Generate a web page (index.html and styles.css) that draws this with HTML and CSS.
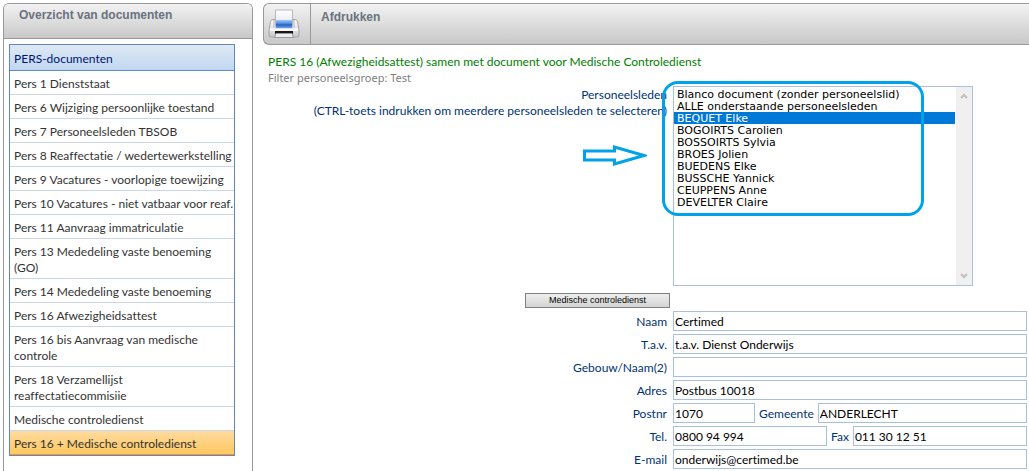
FILE: index.html
```html
<!DOCTYPE html>
<html lang="nl">

<head>
  <meta charset="UTF-8" />
  <meta name="viewport" content="width=device-width, initial-scale=1" />
  <title>Afdrukken</title>
  <link rel="stylesheet" href="styles.css">
</head>

<body>
  <div class="page">
    <aside class="sidebar">
      <h2 class="sidebar-title">Overzicht van documenten</h2>
      <nav class="menu">
        <h3 class="menu-title">PERS-documenten</h3>
        <a href="#">Pers 1 Dienststaat</a>
        <a href="#">Pers 6 Wijziging persoonlijke toestand</a>
        <a href="#">Pers 7 Personeelsleden TBSOB</a>
        <a href="#">Pers 8 Reaffectatie / wedertewerkstelling</a>
        <a href="#">Pers 9 Vacatures - voorlopige toewijzing</a>
        <a href="#">Pers 10 Vacatures - niet vatbaar voor reaf.</a>
        <a href="#">Pers 11 Aanvraag immatriculatie</a>
        <a href="#">Pers 13 Mededeling vaste benoeming (GO)</a>
        <a href="#">Pers 14 Mededeling vaste benoeming</a>
        <a href="#">Pers 16 Afwezigheidsattest</a>
        <a href="#">Pers 16 bis Aanvraag van medische controle</a>
        <a href="#">Pers 18 Verzamellijst reaffectatiecommisiie</a>
        <a href="#">Medische controledienst</a>
        <a href="#" class="active">Pers 16 + Medische controledienst</a>
      </nav>
    </aside>

    <main class="content">
      <header class="toolbar">
        <div class="toolbar-icon">
          <svg width="32" height="32" viewBox="0 0 32 32">
            <defs>
              <linearGradient id="paper" x1="0" y1="0" x2="0" y2="1">
                <stop offset="0" stop-color="#ffffff" />
                <stop offset="1" stop-color="#dfe6f0" />
              </linearGradient>
              <linearGradient id="case" x1="0" y1="0" x2="0" y2="1">
                <stop offset="0" stop-color="#ffffff" />
                <stop offset="1" stop-color="#c8c8cc" />
              </linearGradient>
              <linearGradient id="glass" x1="0" y1="0" x2="0" y2="1">
                <stop offset="0" stop-color="#a4c6f5" />
                <stop offset="0.4" stop-color="#5b93e4" />
                <stop offset="0.6" stop-color="#2461c4" />
                <stop offset="1" stop-color="#6aa2ee" />
              </linearGradient>
            </defs>
            <path d="M5 11.500h22q2 0 2.500 2L31 22v5q0 2-2 2H3q-2 0-2-2v-5l1.500-8.500q.5-2 2.500-2z" fill="url(#case)" stroke="#a4a4a8" />
            <path d="M5 12h22v8H5z" fill="#d2d2d6" />
            <path d="M7.500 2h17v16h-17z" fill="url(#paper)" stroke="#b8b8bc" />
            <path d="M8 12h16v8H8z" fill="url(#glass)" />
            <path d="M2 20q14 2 28 0v3H2z" fill="#fafafc" />
            <path d="M7 23h18v3H7z" fill="#151515" />
            <path d="M8 25.500h16l1.500 4h-19z" fill="#ececf0" stroke="#99999e" />
          </svg>
        </div>
        <h1 class="toolbar-title">Afdrukken</h1>
      </header>

      <p class="doc-title">PERS 16 (Afwezigheidsattest) samen met document voor Medische Controledienst</p>
      <p class="doc-filter">Filter personeelsgroep: Test</p>

      <form class="form">
        <label class="staff-label" for="staff">Personeelsleden<br>(CTRL-toets indrukken om meerdere personeelsleden te selecteren)</label>
        <div class="staff">
          <div class="listbox">
            <select id="staff" multiple size="10">
              <option>Blanco document (zonder personeelslid)</option>
              <option>ALLE onderstaande personeelsleden</option>
              <option selected>BEQUET Elke</option>
              <option>BOGOIRTS Carolien</option>
              <option>BOSSOIRTS Sylvia</option>
              <option>BROES Jolien</option>
              <option>BUEDENS Elke</option>
              <option>BUSSCHE Yannick</option>
              <option>CEUPPENS Anne</option>
              <option>DEVELTER Claire</option>
            </select>
            <div class="scrollbar">
              <svg width="8" height="6" viewBox="0 0 8 6"><path d="M1 5l3-3 3 3" /></svg>
              <svg width="8" height="6" viewBox="0 0 8 6"><path d="M1 1l3 3 3-3" /></svg>
            </div>
          </div>
          <div class="mark-box"></div>
          <svg class="mark-arrow" width="64" height="21" viewBox="0 0 64 21">
            <path d="M1.500 6h30V2L61 10.500 31.500 19v-4h-30z" />
          </svg>
        </div>

        <button type="button" class="service-button">Medische controledienst</button>

        <label for="naam">Naam</label>
        <input type="text" id="naam" value="Certimed">

        <label for="tav">T.a.v.</label>
        <input type="text" id="tav" value="t.a.v. Dienst Onderwijs">

        <label for="gebouw">Gebouw/Naam(2)</label>
        <input type="text" id="gebouw">

        <label for="adres">Adres</label>
        <input type="text" id="adres" value="Postbus 10018">

        <label for="postnr">Postnr</label>
        <div class="pair">
          <input type="text" id="postnr" class="short" value="1070">
          <label for="gemeente">Gemeente</label>
          <input type="text" id="gemeente" value="ANDERLECHT">
        </div>

        <label for="tel">Tel.</label>
        <div class="pair">
          <input type="text" id="tel" class="medium" value="0800 94 994">
          <label for="fax">Fax</label>
          <input type="text" id="fax" value="011 30 12 51">
        </div>

        <label for="email">E-mail</label>
        <input type="text" id="email" value="onderwijs@certimed.be">
      </form>
    </main>
  </div>
</body>

</html>
```
FILE: styles.css
```css
* {
  margin: 0;
  padding: 0;
  box-sizing: border-box;
}

body {
  font-family: Lato, 'Segoe UI', sans-serif;
  font-size: 12px;
  line-height: 16px;
  font-variant-ligatures: none;
  background-color: #fff;
  color: #333;
}

.page {
  display: flex;
  gap: 10px;
  min-height: 100vh;
  padding: 3px 0 0 3px;
}

/* left column */
.sidebar {
  flex: none;
  width: 250px;
  border: 1px solid #999;
  border-bottom: none;
  border-radius: 6px 6px 0 0;
}

.sidebar-title,
.toolbar {
  background: linear-gradient(#f2f2f2, #c8c8c8);
}

.sidebar-title,
.toolbar-title {
  font-family: 'Liberation Sans', Arial, sans-serif;
  font-size: 12px;
  line-height: 16px;
  color: #6b7280;
}

.sidebar-title {
  height: 35px;
  padding: 3px 15px;
  border-bottom: 1px solid #999;
  border-radius: 5px 5px 0 0;
}

.menu {
  width: 226px;
  margin: 5px;
  border: 1px solid #6187b8;
}

.menu-title {
  padding: 6px 4px 3px;
  font-size: 12px;
  font-weight: normal;
  color: #00156e;
  background: linear-gradient(#dfe9f5, #c0d7f1);
  border-bottom: 1px solid #5c8bc9;
}

.menu a {
  display: block;
  padding: 5px 0 2px 4px;
  color: #333;
  text-decoration: none;
  border-bottom: 1px solid #ccd6e8;
}

.menu a.active {
  background: linear-gradient(#ffdb9f, #ffc860);
  border-bottom-color: #f29536;
}

/* right column */
.content {
  flex: 1;
  min-width: 0;
}

.toolbar {
  display: flex;
  height: 42px;
  border: 1px solid #999;
  border-right: none;
  border-radius: 6px 0 0 6px;
}

.toolbar-icon {
  width: 47px;
  padding: 4px;
  border-right: 1px solid #999;
}

.toolbar-title {
  padding: 5px 10px;
}

.doc-title {
  padding: 9px 5px 0;
  color: #008000;
}

.doc-filter {
  padding: 0 5px;
  font-family: 'Noto Sans', sans-serif;
  font-size: 11px;
  line-height: 16px;
  color: #808080;
}

.form {
  display: grid;
  grid-template-columns: 404px 1fr;
  gap: 3px 6px;
  padding-right: 2px;
}

.form > label {
  grid-column: 1;
}

label {
  padding-top: 3px;
  text-align: right;
  color: #003372;
}

.form .staff-label {
  padding-top: 1px;
}

input {
  width: 100%;
  min-width: 0;
  height: 20px;
  padding: 1px;
  font-family: inherit;
  font-size: 12px;
  font-variant-ligatures: none;
  color: #000;
  background-color: #fff;
  border: 1px solid #a9bfe0;
}

.pair {
  display: flex;
  gap: 4px;
}

.pair input {
  flex: 1;
}

.pair .short {
  flex: none;
  width: 82px;
}

.pair .medium {
  flex: none;
  width: 154px;
}

.staff {
  position: relative;
  margin-bottom: 4px;
}

.listbox {
  display: flex;
  width: 300px;
  height: 200px;
  border: 1px solid #a9bfe0;
}

.listbox select {
  flex: 1;
  padding: 1px 1px 0 0;
  font-family: 'DejaVu Sans', Verdana, sans-serif;
  font-size: 11px;
  color: #000;
  background-color: #fff;
  border: none;
  outline: none;
  overflow: hidden;
}

.listbox option {
  min-height: 12px;
  height: 12px;
  padding: 0 3px;
  line-height: 12px;
}

.listbox option:checked {
  background: linear-gradient(#0078d7, #0078d7);
  -webkit-text-fill-color: #fff;
}

.scrollbar {
  display: flex;
  flex-direction: column;
  justify-content: space-between;
  align-items: center;
  width: 16px;
  padding: 6px 0;
  background-color: #f0f0f0;
}

.scrollbar path {
  fill: none;
  stroke: #bfbfbf;
  stroke-width: 2;
}

/* marks drawn over the list */
.mark-box {
  position: absolute;
  top: -5px;
  left: -11px;
  width: 262px;
  height: 135px;
  border: 3px solid #00a2e8;
  border-radius: 16px;
  pointer-events: none;
}

.mark-arrow {
  position: absolute;
  top: 59px;
  left: -90px;
}

.mark-arrow path {
  fill: none;
  stroke: #00a2e8;
  stroke-width: 3;
}

.service-button {
  grid-column: 1;
  justify-self: end;
  width: 145px;
  height: 15px;
  margin-right: -3px;
  font-family: 'Liberation Sans', Arial, sans-serif;
  font-size: 9px;
  line-height: 11px;
  color: #000;
  background: linear-gradient(#eee, #d4d4d4);
  border: 1px solid #808080;
}
```
